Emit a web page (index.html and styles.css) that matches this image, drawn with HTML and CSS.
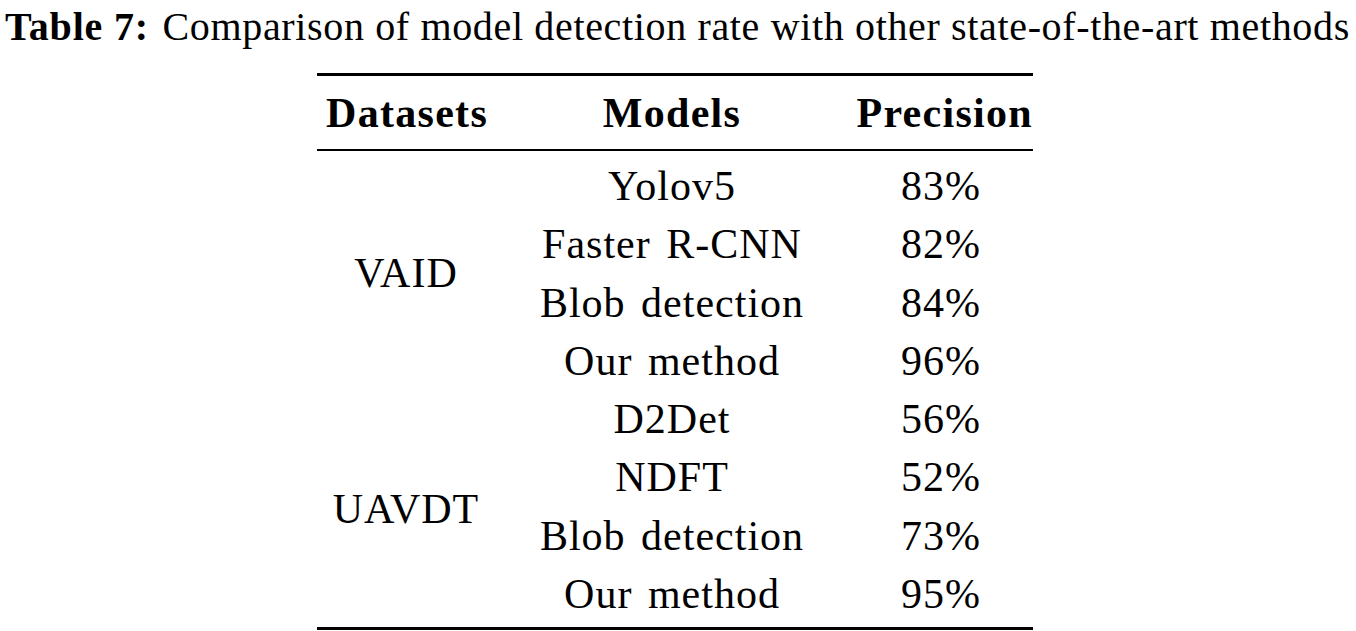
FILE: index.html
```html
<!DOCTYPE html>
<html>
<head>
<meta charset="utf-8">
<link rel="stylesheet" href="styles.css">
</head>
<body>
<div class="caption"><b class="label">Table 7:</b> Comparison of model detection rate with other state-of-the-art methods</div>
<table class="results">
  <colgroup>
    <col class="c1"><col class="c2"><col class="c3">
  </colgroup>
  <thead>
    <tr><th>Datasets</th><th>Models</th><th>Precision</th></tr>
  </thead>
  <tbody>
    <tr class="first"><td rowspan="4">VAID</td><td>Yolov5</td><td>83%</td></tr>
    <tr><td>Faster R-CNN</td><td>82%</td></tr>
    <tr><td>Blob detection</td><td>84%</td></tr>
    <tr><td>Our method</td><td>96%</td></tr>
    <tr><td rowspan="4">UAVDT</td><td>D2Det</td><td>56%</td></tr>
    <tr><td>NDFT</td><td>52%</td></tr>
    <tr><td>Blob detection</td><td>73%</td></tr>
    <tr class="last"><td>Our method</td><td>95%</td></tr>
  </tbody>
</table>
</body>
</html>
```
FILE: styles.css
```css
html, body {
  margin: 0;
  padding: 0;
  background: #fff;
  color: #000;
  font-family: "Liberation Serif", "Times New Roman", serif;
}
.caption {
  font-size: 40px;
  line-height: 54px;
  padding-left: 5px;
  letter-spacing: 0.65px;
  white-space: nowrap;
}
.label {
  letter-spacing: 0.8px;
  margin-right: 3px;
}
.results {
  border-collapse: collapse;
  margin: 19px 0 0 317px;
  width: 716px;
  font-size: 42px;
  border-top: 3px solid #000;
  border-bottom: 3px solid #000;
}
.c1 { width: 178px; }
.c2 { width: 354px; }
.c3 { width: 184px; }
.results th {
  font-weight: bold;
  height: 73px;
  padding: 0;
  line-height: 44px;
  letter-spacing: 1.3px;
  border-bottom: 2px solid #000;
  text-align: center;
}
.results th:first-child { text-align: left; padding-left: 9px; }
.results th:last-child { text-align: right; padding-right: 0; }
.results td {
  padding: 0;
  text-align: center;
  line-height: 58.3px;
  letter-spacing: 1px;
  word-spacing: 4px;
}
.results tr.first td { padding-top: 6px; }
.results tr.last td { padding-bottom: 4px; }
```
